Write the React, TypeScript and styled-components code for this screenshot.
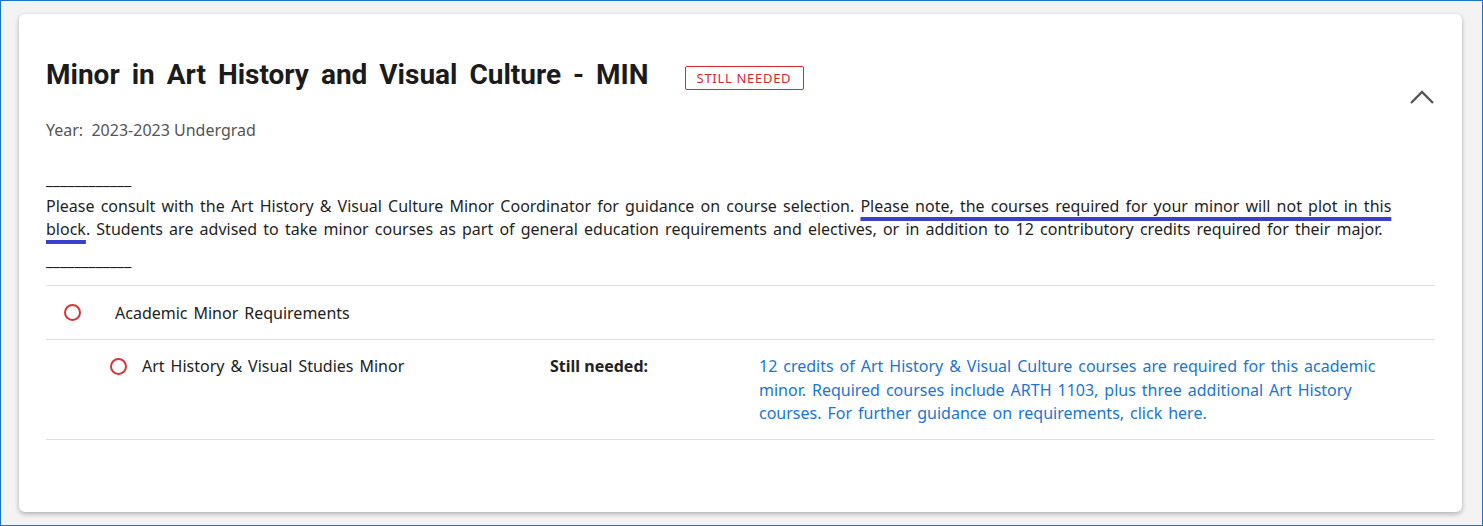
import React from "react";
import styled, { createGlobalStyle } from "styled-components";

const GlobalStyle = createGlobalStyle`
    html, body {
        margin: 0;
        padding: 0;
    }
    body {
        font-family: "Noto Sans", "Open Sans", sans-serif;
        color: #222;
    }
`;

const Frame = styled.div`
    box-sizing: border-box;
    width: 1483px;
    height: 526px;
    border: 1px solid #1a73c8;
    background: #f3f3f3;
    padding: 13px 20px 13px 18px;
`;

const Card = styled.section`
    box-sizing: border-box;
    height: 100%;
    background: #fff;
    border-radius: 6px;
    box-shadow: 0 2px 5px rgba(0, 0, 0, 0.28);
    padding: 45px 27px 0 27px;
`;

const Header = styled.div`
    display: flex;
    align-items: center;
    justify-content: space-between;
`;

const TitleRow = styled.div`
    display: flex;
    align-items: center;
    gap: 36px;
`;

const Title = styled.h2`
    margin: 0;
    font-family: Roboto, "Liberation Sans", sans-serif;
    font-weight: 700;
    font-size: 28px;
    line-height: 32px;
    word-spacing: 5px;
    color: #1b1b1b;
`;

const Badge = styled.span`
    border: 1px solid #d9272e;
    border-radius: 2px;
    color: #d9272e;
    font-size: 13px;
    letter-spacing: 0.7px;
    line-height: 22px;
    padding: 0 12px 0 11px;
    margin-top: 6px;
`;

const Year = styled.div`
    margin-top: 28px;
    font-size: 16px;
    line-height: 22px;
    color: #555;
    white-space: pre;
`;

const Chevron = styled.button`
    border: none;
    background: none;
    padding: 0;
    margin-bottom: 6px;
    display: flex;
    color: #555;
    cursor: pointer;
`;

const Notes = styled.div`
    margin-top: 27px;
    font-size: 16px;
    line-height: 23px;
    word-spacing: 2px;
    color: #1f1f1f;
`;

const Rule = styled.div<{ $top: number; $bottom: number }>`
    line-height: 23px;
    word-spacing: 0;
    margin: ${(p) => p.$top}px 0 ${(p) => p.$bottom}px;
`;

const Marked = styled.span`
    text-decoration: underline;
    text-decoration-color: #3b40c8;
    text-decoration-thickness: 4px;
    text-underline-offset: 5px;
    text-decoration-skip-ink: none;
`;

const Rows = styled.div`
    margin-top: 13px;
    border-top: 1px solid #dedede;
    font-size: 16px;
    word-spacing: 1.8px;
`;

const Row = styled.div`
    display: flex;
    align-items: center;
    height: 53px;
    border-bottom: 1px solid #dedede;
`;

const Status = styled.span<{ $left: number; $space: number }>`
    box-sizing: border-box;
    width: 17px;
    height: 17px;
    border: 2px solid #d8343a;
    border-radius: 50%;
    margin-left: ${(p) => p.$left}px;
    margin-right: ${(p) => p.$space}px;
    flex: none;
`;

const SubRow = styled.div`
    display: grid;
    grid-template-columns: 504px 209px 630px;
    padding: 15px 0 13px;
    border-bottom: 1px solid #dedede;
    line-height: 23.5px;
`;

const SubLabel = styled.div`
    display: flex;
    align-items: center;
    align-self: start;
    height: 23.5px;
`;

const Needed = styled.div`
    font-weight: 700;
    word-spacing: 0;
`;

const Advice = styled.a`
    color: #1976d2;
    text-decoration: none;
`;

export default function App() {
    return (
        <>
            <GlobalStyle />
            <Frame>
                <Card>
                    <Header>
                        <div>
                            <TitleRow>
                                <Title>Minor in Art History and Visual Culture - MIN</Title>
                                <Badge>STILL NEEDED</Badge>
                            </TitleRow>
                            <Year>Year:  2023-2023 Undergrad</Year>
                        </div>
                        <Chevron aria-label="Collapse">
                            <svg width="26" height="16" viewBox="0 0 26 16" fill="none">
                                <path d="M2 14 L13 3 L24 14" stroke="currentColor" strokeWidth="2.4" />
                            </svg>
                        </Chevron>
                    </Header>
                    <Notes>
                        <Rule $top={0} $bottom={4}>____________</Rule>
                        <div>
                            Please consult with the Art History &amp; Visual Culture Minor Coordinator for
                            guidance on course selection.{" "}
                            <Marked>
                                Please note, the courses required for your minor will not plot in this block
                            </Marked>
                            . Students are advised to take minor courses as part of general education
                            requirements and electives, or in addition to 12 contributory credits required
                            for their major.
                        </div>
                        <Rule $top={8} $bottom={0}>____________</Rule>
                    </Notes>
                    <Rows>
                        <Row>
                            <Status $left={18} $space={34} />
                            Academic Minor Requirements
                        </Row>
                        <SubRow>
                            <SubLabel>
                                <Status $left={64} $space={15} />
                                Art History &amp; Visual Studies Minor
                            </SubLabel>
                            <Needed>Still needed:</Needed>
                            <Advice href="#">
                                12 credits of Art History &amp; Visual Culture courses are required for this
                                academic minor. Required courses include ARTH 1103, plus three additional Art
                                History courses. For further guidance on requirements, click here.
                            </Advice>
                        </SubRow>
                    </Rows>
                </Card>
            </Frame>
        </>
    );
}
